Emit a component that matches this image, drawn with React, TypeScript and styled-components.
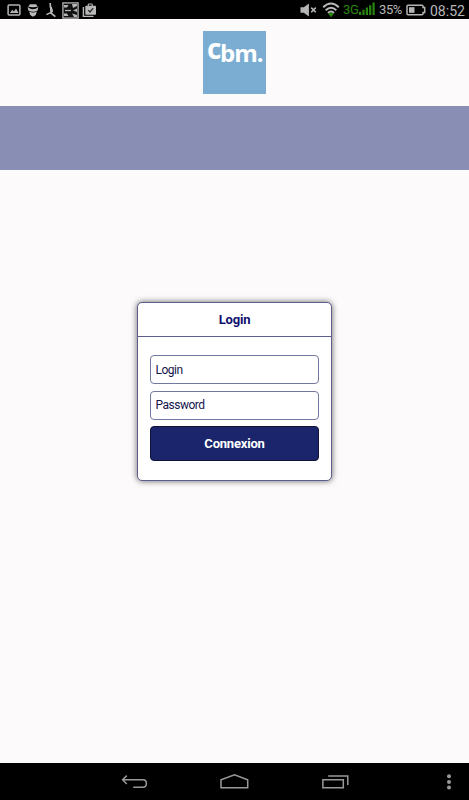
import * as React from 'react';
import styled, { createGlobalStyle } from 'styled-components';

const App = () => (
  <Screen>
    <GlobalStyle />
    <StatusBar />
    <Header>
      <Logo>
        <LogoInitial>c</LogoInitial>
        <LogoText>bm.</LogoText>
      </Logo>
    </Header>
    <Banner />
    <Main>
      <LoginBox />
    </Main>
    <NavBar />
  </Screen>
);

export default App;

const LoginBox = () => (
  <Box>
    <BoxTitle>Login</BoxTitle>
    <Form onSubmit={e => e.preventDefault()}>
      <Input type="text" placeholder="Login" aria-label="Login" />
      <Input type="password" placeholder="Password" aria-label="Password" />
      <Button type="submit">Connexion</Button>
    </Form>
  </Box>
);

const StatusBar = () => (
  <Bar>
    <Notifications>
      <svg width="14" height="12" viewBox="0 0 14 12">
        <rect x="1.1" y="1.1" width="11.8" height="9.8" rx="1" fill="none" stroke="#b4b4b4" strokeWidth="1.5" />
        <path d="M2.8 9 5.3 5.8 7 7.6 9 4.6 11.6 9Z" fill="#b4b4b4" />
      </svg>
      <svg width="12" height="13" viewBox="0 0 12 13">
        <path d="M3 .3h6l1.8 2.5Q6 3.6 1.2 2.8Z" fill="#bbb" />
        <path d="M.6 3Q6 7.4 11.4 3L10.6 6.6Q6 9 1.4 6.6Z" fill="#bbb" />
        <path d="M2.2 7.4Q6 9.4 9.8 7.4L8.8 11 6 12.8 3.2 11Z" fill="#bbb" />
      </svg>
      <svg width="12" height="16" viewBox="0 0 12 16">
        <path
          d="M5.2 1 5.5 5 7 9 6.1 11.2 10.4 14.6M6.1 10.4 1.4 12.6"
          fill="none"
          stroke="#b8b8b8"
          strokeWidth="1.6"
        />
        <path d="M4.8 3.5 7 5.2 8 9.5 5.6 11 5 8Z" fill="#b8b8b8" />
      </svg>
      <Puzzle width="17" height="17" viewBox="0 0 17 17">
        <rect x=".9" y=".9" width="15.2" height="15.2" fill="#111" stroke="#b4b4b4" strokeWidth="1.3" />
        <path
          d="M2 3H6.5L5 5.5H2ZM2 11.5H5L6.5 14H2ZM10 2H15V4L11 6ZM11 8.5 15 6.5V10ZM10 11.5 15 13V15H12Z"
          fill="#b4b4b4"
        />
        <path d="M3 8.5H9" stroke="#b4b4b4" strokeWidth="1.3" />
      </Puzzle>
      <Bag width="15" height="15" viewBox="0 0 15 15">
        <path d="M1.4 4V13.4H11.5" fill="none" stroke="#b8b8b8" strokeWidth="1.4" />
        <path d="M6.3 3.3V1.7Q6.3 1 6.8 1H9.7Q10.2 1 10.2 1.7V3.3" fill="none" stroke="#b8b8b8" strokeWidth="1.2" />
        <rect x="3.3" y="2.8" width="10.7" height="9" rx=".8" fill="#b8b8b8" />
        <path d="M6.2 7.2 8 9 11.2 5.2" fill="none" stroke="#222" strokeWidth="1.2" />
      </Bag>
    </Notifications>
    <Indicators>
      <svg width="17" height="14" viewBox="0 0 17 14">
        <path d="M.5 4.2H3.8L8.9 .4V13.6L3.8 9.8H.5Z" fill="#b5b5b5" />
        <path d="M11.2 4.6 15.8 9.2M15.8 4.6 11.2 9.2" stroke="#b5b5b5" strokeWidth="1.6" />
      </svg>
      <Wifi width="18" height="16" viewBox="0 0 18 16">
        <path
          d="M1.2 5.3Q9-2.2 16.8 5.3M3.7 8.2Q9 3.2 14.3 8.2M6 10.9Q9 8.2 12 10.9"
          fill="none"
          stroke="#b8b8b8"
          strokeWidth="2"
        />
        <path d="M6.2 11.8Q9 9.6 11.8 11.8L9 15.2Z" fill="#28860f" />
      </Wifi>
      <Network>3G</Network>
      <Signal width="16" height="14" viewBox="0 0 16 14">
        <path d="M0 9.7H2.2V13H0ZM3.4 7.7H5.6V13H3.4ZM6.8 5.4H9V13H6.8ZM10.1 3.2H12.3V13H10.1ZM13.5 .6H15.7V13H13.5Z" fill="#28860f" />
      </Signal>
      <Percent>35%</Percent>
      <Battery width="20" height="12" viewBox="0 0 20 12">
        <path d="M2 1.2H16Q17 1.2 17 2.2V3.5H18.7V8.5H17V9.8Q17 10.8 16 10.8H2Q1 10.8 1 9.8V2.2Q1 1.2 2 1.2Z" fill="none" stroke="#b5b5b5" strokeWidth="1.5" />
        <rect x="3" y="3.2" width="5.5" height="5.6" fill="#b5b5b5" />
      </Battery>
      <Clock>08:52</Clock>
    </Indicators>
  </Bar>
);

const NavBar = () => (
  <Nav>
    <NavIcon $left={120} width="28" height="18" viewBox="0 0 28 18">
      <path d="M2.6 6.8H22.7Q26.4 6.8 26.4 10.5T22.7 14.3H13.2M6.8 2.6 2.6 6.8 6.8 11" />
    </NavIcon>
    <NavIcon $left={71} width="30" height="18" viewBox="0 0 30 18">
      <path d="M2 14.8V6.7L15.5 1.9 28.7 6.7V14.8Z" />
    </NavIcon>
    <NavIcon $left={72} width="28" height="18" viewBox="0 0 28 18">
      <path d="M1.9 6.8H22.3V14.8H1.9ZM7.2 3.1H26.8V12" />
    </NavIcon>
    <Overflow width="6" height="18" viewBox="0 0 6 18">
      <circle cx="3" cy="3.2" r="2" />
      <circle cx="3" cy="8.9" r="2" />
      <circle cx="3" cy="14.4" r="2" />
    </Overflow>
  </Nav>
);

const GlobalStyle = createGlobalStyle`
  * {
    box-sizing: border-box;
  }
  body {
    margin: 0;
    background: #fcfafb;
    font-family: Roboto, sans-serif;
  }
  svg {
    display: block;
    flex: none;
  }
`;

const Screen = styled.div`
  display: flex;
  flex-direction: column;
  height: 100vh;
  min-height: 480px;
  overflow: hidden;
`;

const Bar = styled.div`
  display: flex;
  justify-content: space-between;
  flex: none;
  height: 19px;
  padding: 0 4px 0 7px;
  background: #000;
`;

const Notifications = styled.div`
  display: flex;
  align-items: center;
  gap: 6px;
  padding-top: 1px;
`;

const Puzzle = styled.svg`
  margin-left: -1px;
`;

const Bag = styled.svg`
  margin-left: -3px;
`;

const Indicators = styled.div`
  display: flex;
  align-items: center;
  padding-top: 1px;
  color: #b8b8b8;
  line-height: 18px;
  white-space: nowrap;
`;

const Wifi = styled.svg`
  margin: 0 3px 0 5px;
`;

const Network = styled.span`
  width: 16px;
  color: #28860f;
  font-size: 13px;
  letter-spacing: -0.4px;
`;

const Signal = styled.svg`
  margin-top: -2px;
`;

const Percent = styled.span`
  width: 27px;
  margin-left: 4px;
  font-size: 13px;
  letter-spacing: -0.4px;
`;

const Battery = styled.svg`
  margin-right: 4px;
`;

const Clock = styled.span`
  width: 35px;
  padding-top: 1px;
  font-size: 14px;
`;

const Header = styled.header`
  display: flex;
  justify-content: center;
  flex: none;
  height: 87px;
  padding-top: 12px;
`;

const Logo = styled.div`
  display: flex;
  width: 63px;
  height: 63px;
  padding: 6px 0 0 4px;
  background: #7badd3;
  color: #fff;
  font-family: 'Open Sans', sans-serif;
  font-weight: bold;
  line-height: 32px;
`;

const LogoInitial = styled.span`
  width: 13px;
  margin-top: -5px;
  font-size: 28px;
`;

const LogoText = styled.span`
  font-size: 24px;
  letter-spacing: -1px;
`;

const Banner = styled.div`
  flex: none;
  height: 64px;
  background: #888eb4;
`;

const Main = styled.main`
  display: flex;
  flex: 1;
  justify-content: center;
  align-items: flex-start;
  padding-top: 132px;
`;

const Box = styled.section`
  width: 195px;
  height: 179px;
  border: 1px solid #5d5d8e;
  border-radius: 5px;
  background: #fff;
  box-shadow: 0 0 6px rgba(0, 0, 0, 0.6);
`;

const BoxTitle = styled.h1`
  height: 34px;
  margin: 0;
  border-bottom: 1px solid #5d5d8e;
  color: #10106f;
  font-size: 13px;
  font-weight: bold;
  letter-spacing: -0.2px;
  line-height: 34px;
  text-align: center;
`;

const Form = styled.form`
  display: flex;
  flex-direction: column;
  gap: 6.5px;
  padding: 18px 12px 0;
`;

const Input = styled.input`
  width: 100%;
  height: 29px;
  padding: 0 5px 0 4.5px;
  border: 1px solid #7477a0;
  border-radius: 4px;
  background: #fff;
  font: 12px Roboto, sans-serif;
  letter-spacing: -0.5px;
  &::placeholder {
    color: #15154c;
    opacity: 1;
  }
`;

const Button = styled.button`
  height: 35px;
  padding: 0;
  border: 1px solid #101332;
  border-radius: 4px;
  background: #1a256c;
  color: #fff;
  font: bold 13px Roboto, sans-serif;
  letter-spacing: -0.2px;
`;

const Nav = styled.nav`
  display: flex;
  flex: none;
  align-items: center;
  height: 37px;
  padding-right: 17px;
  background: #000;
`;

const NavIcon = styled.svg<{ $left: number }>`
  margin-left: ${props => props.$left}px;
  fill: none;
  stroke: #999;
  stroke-width: 1.5;
`;

const Overflow = styled.svg`
  margin-left: auto;
  fill: #999;
`;
